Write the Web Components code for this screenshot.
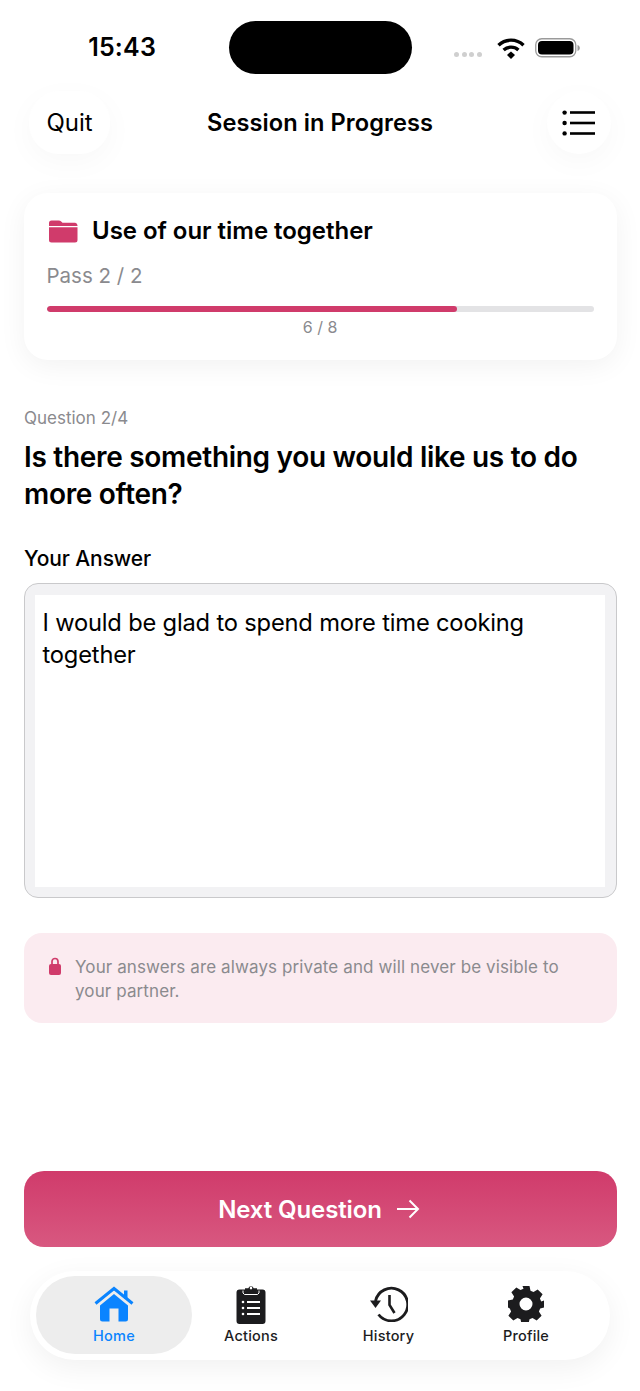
<!DOCTYPE html>
<html lang="en"><head><meta charset="utf-8"><title>Session in Progress</title>
<style>
html,body{margin:0;padding:0;background:#fff}
body{font-family:Inter,"Liberation Sans",sans-serif;color:#000;width:640px;height:1391px;overflow:hidden}
</style></head><body>
<session-screen></session-screen>
<script>
const def=(name,css,html)=>customElements.define(name,class extends HTMLElement{constructor(){super();this.attachShadow({mode:'open'}).innerHTML=`<style>${css}</style>${html}`}});
def('status-bar',`:host{display:grid;grid-template-columns:229px 183px 1fr;height:91px;box-sizing:border-box;padding-top:21px;position:relative}
.time{font-size:25px;font-weight:600;letter-spacing:.2px;text-align:right;padding-right:73px;line-height:53px;height:53px}
.island{width:183px;height:53px;border-radius:27px;background:#000}
.right{display:flex;align-items:flex-start;padding-left:42px;padding-top:16px}
.dots{display:flex;gap:2.700px;margin-top:15px}.dots i{width:5px;height:5px;border-radius:50%;background:#cfcfcf}
svg{display:block}`,
`<div class="time">15:43</div><div class="island"></div><div class="right"><div class="dots"><i></i><i></i><i></i><i></i></div>
<svg width="28" height="22" viewBox="0 0 28 22" style="margin-left:15px;margin-top:1px"><path d="M1.500 7.200A18 18 0 0 1 26.500 7.200" fill="none" stroke="#000" stroke-width="3.400"/><path d="M6.600 12A11 11 0 0 1 21.400 12" fill="none" stroke="#000" stroke-width="3.400"/><path d="M10 17l4-3.600 4 3.600-4 4z" fill="#000"/></svg>
<svg width="46" height="22" viewBox="0 0 46 22" style="margin-left:10px"><rect x=".75" y="1.750" width="40" height="18" rx="6" fill="none" stroke="#9a9a9a" stroke-width="1.300"/><rect x="3" y="4" width="35.500" height="13.500" rx="4" fill="#000"/><path d="M42.500 8v6c1.600-.5 2.300-1.600 2.300-3s-.7-2.500-2.300-3z" fill="#9a9a9a"/></svg>
</div>`);
def('app-header',`:host{display:grid;grid-template-columns:1fr auto 1fr;align-items:center;height:63px;padding:0 29px}
button{font:inherit;border:0;background:#fff;color:#000;height:63px;box-shadow:0 8px 30px rgba(0,0,0,.03);padding:0;display:flex;align-items:center;justify-content:center}
.quit{width:81px;border-radius:30px;font-size:24px;justify-self:start}
.menu{width:64px;border-radius:50%;justify-self:end}
h1{margin:0;font-size:23.600px;font-weight:600;letter-spacing:.07px}`,
`<button class="quit">Quit</button><h1>Session in Progress</h1><button class="menu" aria-label="Menu"><svg width="34" height="26" viewBox="0 0 34 26"><g fill="#000"><circle cx="2.600" cy="2.600" r="2.200"/><circle cx="2.600" cy="13" r="2.200"/><circle cx="2.600" cy="23.400" r="2.200"/><rect x="8" y="1.200" width="25" height="2.600"/><rect x="8" y="11.700" width="25" height="2.600"/><rect x="8" y="22.200" width="25" height="2.600"/></g></svg></button>`);
def('progress-card',`:host{display:block;margin:39px 23.500px 0;height:167px;box-sizing:border-box;background:#fff;border-radius:24px;box-shadow:0 6px 28px rgba(0,0,0,.055);padding:23px 23px 0}
.t{display:flex;align-items:center;gap:14.500px;height:30px;margin-left:2px}
.t b{font-size:24px;font-weight:600;letter-spacing:-.03px;position:relative;top:-1px}
svg{display:block}
.p{font-size:20.500px;color:#8a8a8e;font-weight:400;margin-top:17px;line-height:26px}
.bar{height:6px;border-radius:3px;background:#e3e3e5;margin-top:17px;overflow:hidden}
.bar i{display:block;width:75%;height:100%;background:#d03b6b;border-radius:3px}
.c{text-align:center;font-size:16px;color:#8a8a8e;margin-top:5px;line-height:20px}`,
`<div class="t"><svg width="29" height="23" viewBox="0 0 29 23"><path d="M0 3a2.500 2.500 0 0 1 2.500-2.500h7.200c1 0 1.800.3 2.500 1l1.300 1.300h12.700A2.800 2.800 0 0 1 28.500 5.600V6H0z" fill="#d03b6b"/><path d="M0 7.200h28.500V20a2.500 2.500 0 0 1-2.500 2.500H2.500A2.500 2.500 0 0 1 0 20z" fill="#d03b6b"/></svg><b>Use of our time together</b></div><div class="p">Pass 2 / 2</div><div class="bar"><i></i></div><div class="c">6 / 8</div>`);
def('question-block',`:host{display:block;margin:46px 24px 0}
.n{font-size:17px;color:#8a8a8e;line-height:24px}
h2{margin:9px 0 0;font-size:28px;line-height:37px;font-weight:600;letter-spacing:-.3px}`,
`<div class="n">Question 2/4</div><h2>Is there something you would like us to do more often?</h2>`);
def('answer-box',`:host{display:block;margin:31px 23.500px 0}
label{display:block;font-size:21px;font-weight:500;line-height:30px;letter-spacing:-.1px;padding-left:.5px}
.b{margin-top:9px;height:315px;box-sizing:border-box;border:1.500px solid #c9c9cb;border-radius:14px;background:#f2f2f4;padding:10.500px;}
.i{background:#fff;height:100%;box-sizing:border-box;padding:12px 7.500px;font-size:23.700px;line-height:32px;letter-spacing:-.18px;color:#000}`,
`<label>Your Answer</label><div class="b"><div class="i">I would be glad to spend more time cooking together</div></div>`);
def('privacy-note',`:host{display:flex;gap:14px;margin:35px 23.500px 0;height:90px;box-sizing:border-box;background:#fbebf0;border-radius:18px;padding:21.500px 24px 0 25.500px}
svg{display:block;margin-top:2px;flex:none}
p{margin:0;font-size:17px;line-height:24px;color:#8a8a8e;letter-spacing:.11px;max-width:510px}`,
`<svg width="12" height="18" viewBox="0 0 12 18"><path d="M3 8V4.500a3 3 0 0 1 6 0V8" fill="none" stroke="#d03b6b" stroke-width="1.700"/><rect y="7" width="12" height="11" rx="2" fill="#d03b6b"/></svg><p>Your answers are always private and will never be visible to your partner.</p>`);
def('next-button',`:host{display:flex;align-items:center;justify-content:center;gap:14px;margin:148px 23.500px 0;height:76px;border-radius:20px;background:linear-gradient(#d03b6b,#d85880);color:#fff;font-size:24px;font-weight:600;letter-spacing:-.12px}
span{margin-left:-2px}svg{display:block}`,
`<span>Next Question</span><svg width="24" height="20" viewBox="0 0 24 20"><path d="M1 10h21M13.500 1.500 22 10l-8.500 8.500" fill="none" stroke="#fff" stroke-width="2"/></svg>`);
def('nav-item',`:host{display:flex;flex-direction:column;align-items:center;color:#1c1c1e;font-size:14.500px;font-weight:500;border-radius:39px;padding-top:8px;box-sizing:border-box;height:78px}
:host([active]){background:#ededed;color:#0a84ff}
.ic{height:40px;display:flex;align-items:center;justify-content:center}
.l{margin-top:2px;line-height:20px;letter-spacing:.2px}`,
`<div class="ic"><slot name="icon"></slot></div><div class="l"><slot></slot></div>`);
def('tab-bar',`:host{display:grid;grid-template-columns:156px 118px 157px 118px;margin:24px 30px 0;height:89px;box-sizing:border-box;padding:5px 6px;background:#fff;border-radius:45px;box-shadow:0 8px 30px rgba(0,0,0,.06)}`,
`<slot></slot>`);
def('session-screen',`:host{display:block;height:1391px;overflow:hidden}`,
`<status-bar></status-bar><app-header></app-header><progress-card></progress-card><question-block></question-block><answer-box></answer-box><privacy-note></privacy-note><next-button></next-button>
<tab-bar>
<nav-item active><svg slot="icon" width="40" height="36" viewBox="0 0 40 36"><path d="M1.500 17.500 20 2.500l18.500 15" fill="none" stroke="#0a84ff" stroke-width="3"/><rect x="30" y="4.500" width="3.500" height="8" fill="#0a84ff"/><path fill-rule="evenodd" d="M20 8 6 19.500V33a2.500 2.500 0 0 0 2.500 2.500h23A2.500 2.500 0 0 0 34 33V19.500zM15.500 22.500h9v13h-9z" fill="#0a84ff"/></svg>Home</nav-item>
<nav-item><svg slot="icon" width="30" height="39" viewBox="0 0 30 39"><path d="M3.500 4.500H9V7h12V4.500h5.500a3 3 0 0 1 3 3V36a3 3 0 0 1-3 3h-23a3 3 0 0 1-3-3V7.500a3 3 0 0 1 3-3z" fill="#1c1c1e"/><path fill-rule="evenodd" d="M9 3.300h3.300a2.800 2.800 0 0 1 5.400 0H21V6.500A1.500 1.500 0 0 1 19.500 8h-9A1.500 1.500 0 0 1 9 6.500zM15 1.800a1.300 1.300 0 1 0 0 2.600 1.300 1.300 0 0 0 0-2.600z" fill="#1c1c1e"/><path d="M7 5.500v2.500l1.500 1.500h13L23 8V5.500" fill="none" stroke="#fff" stroke-width="1"/><g fill="#fff"><rect x="11" y="16" width="13" height="2"/><rect x="11" y="22" width="13" height="2"/><rect x="11" y="28" width="13" height="2"/><circle cx="7" cy="17" r="1.300"/><circle cx="7" cy="23" r="1.300"/><circle cx="7" cy="29" r="1.300"/></g></svg>Actions</nav-item>
<nav-item><svg slot="icon" width="38" height="36" viewBox="0 0 38 36"><path d="M5.500 15A16.300 16.300 0 1 1 8.500 28.500" fill="none" stroke="#1c1c1e" stroke-width="2.800"/><path d="M0 14.500h11L5.500 22z" fill="#1c1c1e"/><path d="M19.500 9v10l5 8" fill="none" stroke="#1c1c1e" stroke-width="2.600"/></svg>History</nav-item>
<nav-item><svg slot="icon" width="36" height="36" viewBox="0 0 36 36"><path fill-rule="evenodd" fill="#1c1c1e" d="M14.500 0h7l1 4.800 3 1.300 4.200-2.700 4.900 4.900-2.700 4.200 1.300 3L36 14.500v7l-3.800 1-1.300 3 2.700 4.200-4.900 4.900-4.200-2.700-3 1.300-1 4.800h-7l-1-4.800-3-1.300-4.200 2.700-4.900-4.900 2.700-4.200-1.300-3L0 21.500v-7l4.800-1 1.300-3L3.400 6.300l4.900-4.900 4.200 2.700 3-1.300zM18 11.500a6.500 6.500 0 1 0 0 13 6.500 6.500 0 0 0 0-13z"/></svg>Profile</nav-item>
</tab-bar>`);
</script></body></html>
